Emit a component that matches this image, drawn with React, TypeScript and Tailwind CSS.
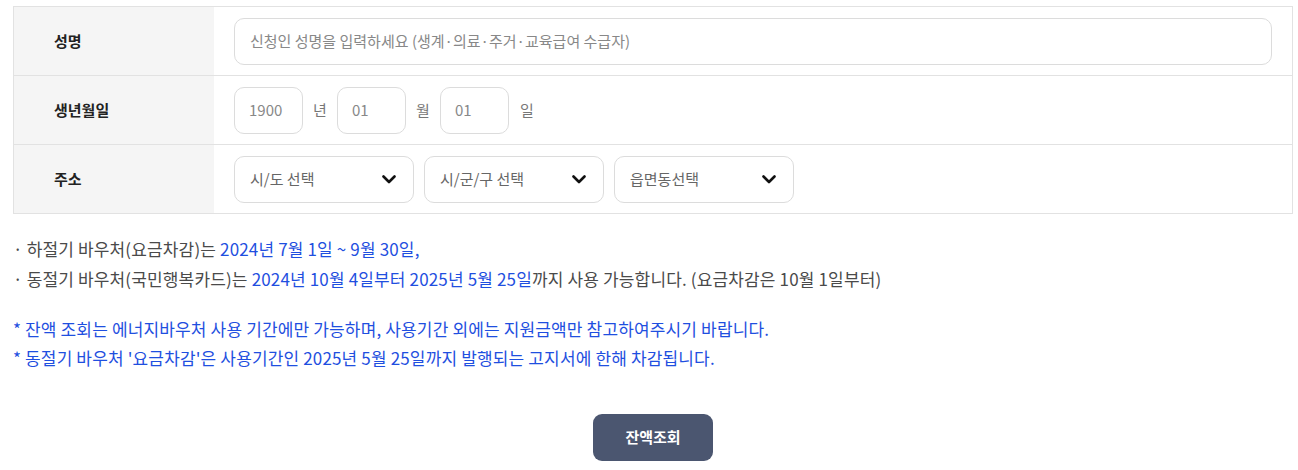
import React from 'react'

const font = { fontFamily: '"Noto Sans CJK KR", "Noto Sans", sans-serif' }

function Chevron() {
  return (
    <svg width="14" height="9" viewBox="0 0 14 9" fill="none">
      <path d="M1.5 1.5L7 7L12.5 1.5" stroke="#111" strokeWidth="2.6" strokeLinecap="round" strokeLinejoin="round" />
    </svg>
  )
}

function Row({ label, children, last }: { label: string; children: React.ReactNode; last?: boolean }) {
  return (
    <div className={`flex ${last ? 'h-[68px]' : 'h-[69px] border-b border-[#e2e2e2]'}`}>
      <div className="w-[200px] shrink-0 bg-[#f5f5f5] flex items-center pl-[40px] text-[15px] font-bold text-[#222]">
        {label}
      </div>
      <div className="flex-1 flex items-center pl-[20px] pr-[20px]">{children}</div>
    </div>
  )
}

function SelectBox({ text }: { text: string }) {
  return (
    <div className="w-[180px] h-[47px] border border-[#dcdcdc] rounded-[10px] flex items-center justify-between pl-[15px] pr-[17px] text-[15px] text-[#666]">
      <span>{text}</span>
      <Chevron />
    </div>
  )
}

function DateBox({ text }: { text: string }) {
  return (
    <div className="w-[69px] h-[47px] border border-[#dcdcdc] rounded-[10px] flex items-center pl-[14px] text-[15px] text-[#888]">
      {text}
    </div>
  )
}

export default function App() {
  return (
    <div className="bg-white w-[1298px] h-[470px] pt-[6px] pl-[13px] pr-[5px]" style={font}>
      <div className="border border-[#e2e2e2]">
        <Row label="성명">
          <div className="w-full h-[47px] border border-[#dcdcdc] rounded-[10px] flex items-center pl-[15px] text-[15px] text-[#888]">
            신청인 성명을 입력하세요 (생계·의료·주거·교육급여 수급자)
          </div>
        </Row>
        <Row label="생년월일">
          <div className="flex items-center text-[15px] text-[#777]">
            <DateBox text="1900" />
            <span className="w-[34px] pl-[10px]">년</span>
            <DateBox text="01" />
            <span className="w-[34px] pl-[10px]">월</span>
            <DateBox text="01" />
            <span className="pl-[11px]">일</span>
          </div>
        </Row>
        <Row label="주소" last>
          <div className="flex gap-[10px]">
            <SelectBox text="시/도 선택" />
            <SelectBox text="시/군/구 선택" />
            <SelectBox text="읍면동선택" />
          </div>
        </Row>
      </div>

      <div className="mt-[20px] text-[17px] leading-[30px] tracking-[0.15px] text-[#4a4a4a]">
        <p>
          · 하절기 바우처(요금차감)는 <span className="text-[#1f4fe0]">2024년 7월 1일 ~ 9월 30일,</span>
        </p>
        <p>
          · 동절기 바우처(국민행복카드)는 <span className="text-[#1f4fe0]">2024년 10월 4일부터 2025년 5월 25일</span>까지 사용 가능합니다. (요금차감은 10월 1일부터)
        </p>
        <div className="mt-[20px] text-[#1f4fe0] leading-[29px]">
          <p>* 잔액 조회는 에너지바우처 사용 기간에만 가능하며, 사용기간 외에는 지원금액만 참고하여주시기 바랍니다.</p>
          <p>* 동절기 바우처 '요금차감'은 사용기간인 2025년 5월 25일까지 발행되는 고지서에 한해 차감됩니다.</p>
        </div>
      </div>

      <div className="flex justify-center mt-[42px]">
        <button className="w-[120px] h-[47px] rounded-[9px] bg-[#4b5670] text-white text-[15px] font-bold">
          잔액조회
        </button>
      </div>
    </div>
  )
}
